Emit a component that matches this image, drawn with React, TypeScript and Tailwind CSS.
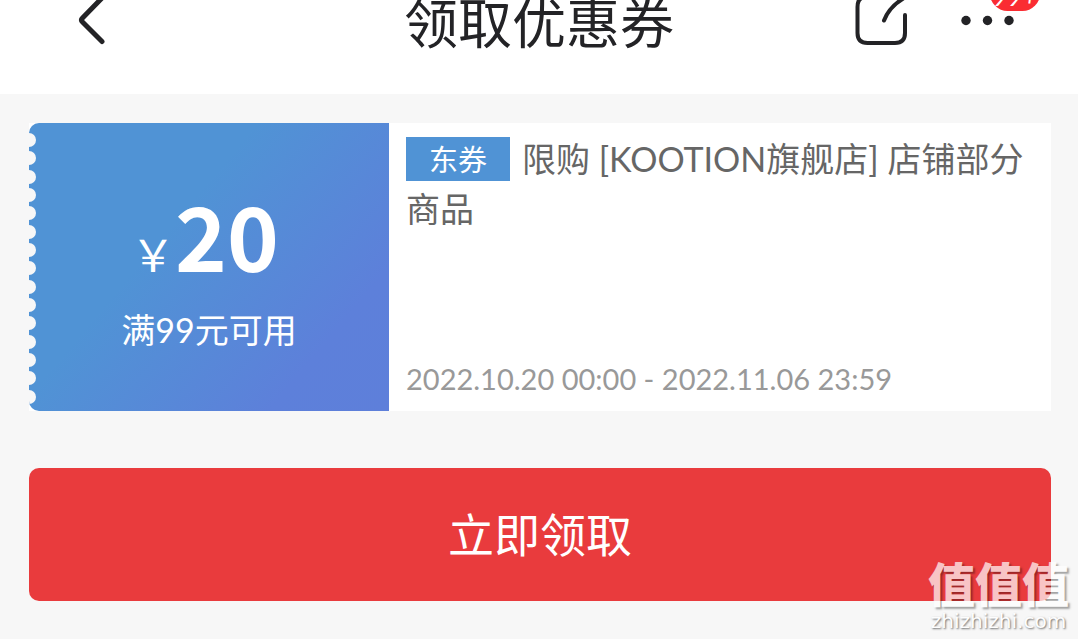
const TEETH = Array.from({ length: 15 }, (_, i) => i);

function Header() {
  return (
    <header className="relative flex h-[94px] items-start justify-between overflow-hidden bg-white pl-[76px] pr-[38px] text-[#232326]">
      <button type="button" aria-label="返回" className="h-12 w-8">
        <svg viewBox="0 0 32 48" className="h-12 w-8" fill="none" stroke="currentColor" strokeWidth="5" strokeLinecap="round" strokeLinejoin="round">
          <path d="M26-2 6.500 18Q4.500 20 6.500 22L26 41.500" />
        </svg>
      </button>
      <h1 className="absolute inset-x-0 -top-4 text-center text-[54px] leading-[80px]">领取优惠券</h1>
      <div className="flex items-start gap-[50px]">
        <button type="button" aria-label="分享" className="h-12 w-[54px]">
          <svg viewBox="0 0 54 48" className="h-12 w-[54px]" fill="none" stroke="currentColor" strokeWidth="4" strokeLinecap="round">
            <path d="M18-3H12Q3.500-3 3.500 7V33Q3.500 43 13.500 43H41Q51 43 51 33V15" />
            <path d="M30 20.500Q35 7 50-2" />
          </svg>
        </button>
        <button type="button" aria-label="更多" className="relative h-12 w-[82px]">
          <svg viewBox="0 0 82 48" className="h-12 w-[82px]" fill="currentColor">
            <circle cx="8" cy="20.500" r="4.700" />
            <circle cx="29.500" cy="20.500" r="4.700" />
            <circle cx="51" cy="20.500" r="4.700" />
          </svg>
          <span className="absolute -top-6 right-0 flex h-[35px] w-[50px] items-center justify-center rounded-full bg-[#fa2c32] pt-1 font-[Lato,sans-serif] text-[26px] italic leading-none text-white">
            99+
          </span>
        </button>
      </div>
    </header>
  );
}

function Coupon() {
  return (
    <section className="flex min-h-[288px] bg-white">
      <div className="relative flex w-[360px] shrink-0 flex-col items-center overflow-hidden rounded-l-[10px] bg-[linear-gradient(130deg,#5093d5_0%,#5093d5_38%,#5d80da_80%,#5e7fda_100%)] pt-[63px] text-white">
        <div aria-hidden="true" className="absolute inset-y-0 -left-[7px] flex flex-col justify-between pb-[7px] pt-[10px]">
          {TEETH.map((i) => (
            <span key={i} className="size-[14px] rounded-full bg-[#f7f7f7]" />
          ))}
        </div>
        <p className="flex items-baseline pr-2 leading-[96px]">
          <span className="text-[44px]">￥</span>
          <strong className="font-['Noto_Sans_CJK_SC',sans-serif] text-[88px] font-bold">20</strong>
        </p>
        <p className="mt-[2px] text-[34px] leading-[50px]">满99元可用</p>
      </div>
      <div className="flex flex-1 flex-col justify-between pb-[10px] pl-[17px] pr-4 pt-[11px]">
        <h2 className="text-[34px] leading-[50px] text-[#666]">
          <span className="mr-3 mt-[3px] inline-flex h-11 w-[104px] items-center justify-center bg-[#5093d5] align-top text-[29px] leading-none text-white">
            东券
          </span>
          限购 [KOOTION旗舰店] 店铺部分商品
        </h2>
        <p className="text-[29px] leading-[44px] text-[#999]">2022.10.20 00:00 - 2022.11.06 23:59</p>
      </div>
    </section>
  );
}

function Watermark() {
  return (
    <div className="pointer-events-none absolute bottom-[6px] right-[9px] flex flex-col items-center text-white">
      <span className="font-['Noto_Sans_CJK_SC',sans-serif] text-[47px] font-black leading-[54px] opacity-70 [text-shadow:2px_2px_2px_rgba(0,0,0,0.5)]">
        值值值
      </span>
      <span className="font-['DejaVu_Sans',sans-serif] text-[20px] leading-6 opacity-80 [text-shadow:1px_1px_2px_rgba(0,0,0,0.7)]">
        zhizhizhi.com
      </span>
    </div>
  );
}

export default function App() {
  return (
    <div className="relative min-h-screen bg-[#f7f7f7] font-[Lato,'Noto_Sans_CJK_SC',sans-serif]">
      <Header />
      <main className="pb-[38px] pl-[29px] pr-[27px] pt-[29px]">
        <Coupon />
        <button type="button" className="mt-[57px] h-[133px] w-full rounded-[10px] bg-[#e93b3d] text-[46px] text-white">
          立即领取
        </button>
      </main>
      <Watermark />
    </div>
  );
}
